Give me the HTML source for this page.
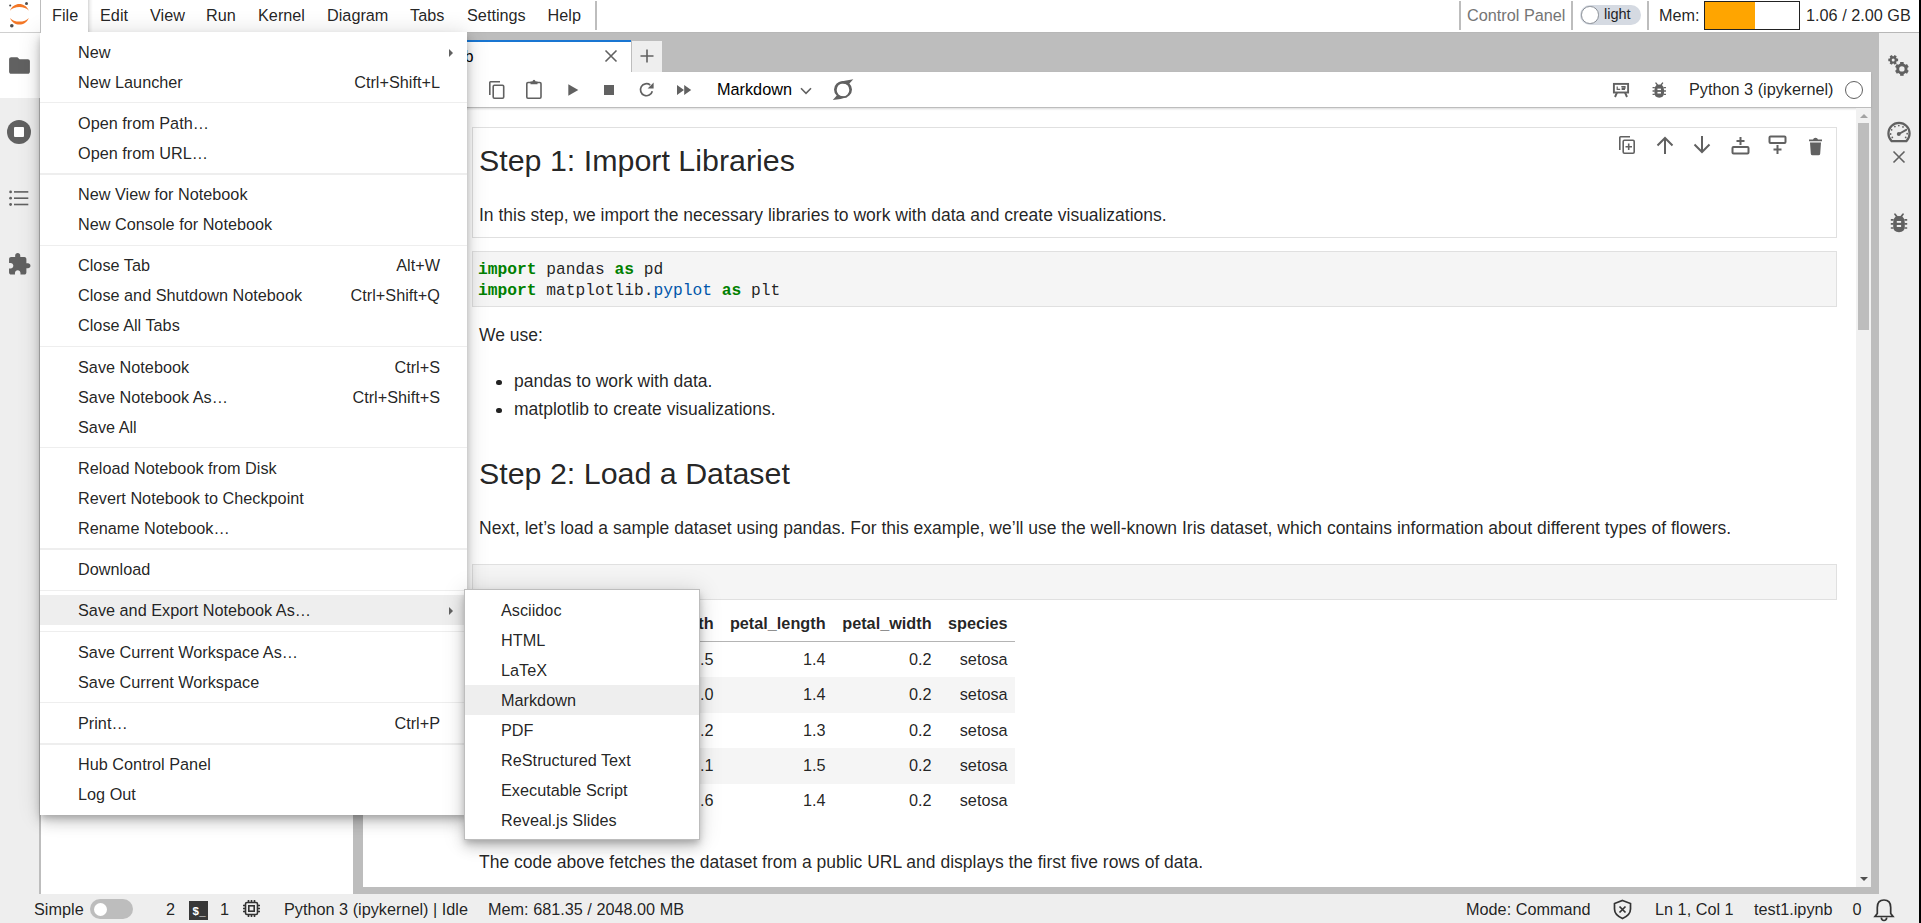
<!DOCTYPE html>
<html><head><meta charset="utf-8">
<style>
*{box-sizing:border-box;margin:0;padding:0}
html,body{width:1921px;height:923px;overflow:hidden;background:#fff;font-family:"Liberation Sans",sans-serif;color:rgba(0,0,0,.87)}
.a{position:absolute}
.t{position:absolute;white-space:nowrap;line-height:1}
svg{position:absolute;display:block}
/* top */
#top{left:0;top:0;width:1921px;height:32px;background:#fff}
.mb{font-size:16.25px;top:7px;color:rgba(0,0,0,.87)}
.sep{width:2px;background:#bdbdbd}
/* main */
#main{left:0;top:32px;width:1921px;height:862px;background:#bdbdbd}
#lsb{left:0;top:32px;width:40px;height:862px;background:#eee;border-right:1px solid #bdbdbd}
#fb{left:41px;top:32px;width:312px;height:862px;background:#fff}
#rsb{left:1879px;top:33px;width:40px;height:861px;background:#eee}
#status{left:0;top:894px;width:1921px;height:29px;background:#eee}
.st{font-size:16.25px;top:901px;color:rgba(0,0,0,.87)}
/* notebook */
#nb{left:363px;top:72px;width:1508px;height:815px;background:#fff}
#tbar{left:363px;top:72px;width:1508px;height:36px;background:#fff;border-bottom:1px solid #bdbdbd;box-shadow:0 1px 2px rgba(0,0,0,.15)}
.cell{position:absolute;left:472px;width:1365px}
.md{font-size:17.5px;color:rgba(0,0,0,.87)}
.tb{font-size:16.25px;color:rgba(0,0,0,.87)}
/* menu */
#menu{left:40px;top:32px;width:427px;height:782.5px;background:#fff;box-shadow:0 3.75px 6.25px -1.25px rgba(0,0,0,.2),0 7.5px 12.5px 0 rgba(0,0,0,.14),0 1.25px 22.5px 0 rgba(0,0,0,.14);}
.mi{position:absolute;left:0;width:100%;height:30px}
.mi .l{position:absolute;left:38px;top:6.5px;font-size:16.25px;white-space:nowrap;line-height:1;color:rgba(0,0,0,.87)}
.mi .k{position:absolute;right:27px;top:6.5px;font-size:16.25px;white-space:nowrap;line-height:1;color:rgba(0,0,0,.87)}
.ms{position:absolute;left:0;width:100%;height:1.25px;background:#eee}
.hl{background:#eee}
.sub .mi .l{left:36px}
.arr{position:absolute;left:409.2px;top:11.5px;width:0;height:0;border-top:4px solid transparent;border-bottom:4px solid transparent;border-left:4.5px solid #616161}
#sub{left:464px;top:589px;width:236px;height:251px;background:#fff;border:1px solid #bdbdbd;box-shadow:0 3.75px 6.25px -1.25px rgba(0,0,0,.2),0 7.5px 12.5px 0 rgba(0,0,0,.14),0 1.25px 22.5px 0 rgba(0,0,0,.14)}
</style></head><body>
<div id="main" class="a"></div>
<div class="a" style="left:0;top:32px;width:1921px;height:1px;background:#b7b7b7"></div>
<div id="top" class="a"></div>
<div id="lsb" class="a"></div>
<div id="fb" class="a"></div>
<div id="rsb" class="a"></div>
<div id="nb" class="a"></div>
<div id="tbar" class="a"></div>
<div id="status" class="a"></div>

<!-- menubar text -->
<div class="t mb" style="left:100px">Edit</div>
<div class="t mb" style="left:150px">View</div>
<div class="t mb" style="left:206px">Run</div>
<div class="t mb" style="left:258px">Kernel</div>
<div class="t mb" style="left:327px">Diagram</div>
<div class="t mb" style="left:410px">Tabs</div>
<div class="t mb" style="left:467px">Settings</div>
<div class="t mb" style="left:547.5px">Help</div>
<div class="a sep" style="left:595px;top:1px;height:29px"></div>

<!-- notebook content -->
<div class="a" style="left:472px;top:127px;width:1365px;height:111px;border:1px solid #e0e0e0"></div>
<div class="t" style="left:479px;top:145px;font-size:30.4px">Step 1: Import Libraries</div>
<div class="t md" style="left:479px;top:207px">In this step, we import the necessary libraries to work with data and create visualizations.</div>
<div class="a" style="left:472px;top:251px;width:1365px;height:56px;border:1px solid #e0e0e0;background:#f5f5f5"></div>
<div class="t" style="left:478px;top:259px;font-family:'Liberation Mono',monospace;font-size:16.25px;line-height:21px"><span style="color:#008000;font-weight:bold">import</span> pandas <span style="color:#008000;font-weight:bold">as</span> pd<br><span style="color:#008000;font-weight:bold">import</span> matplotlib.<span style="color:#05a">pyplot</span> <span style="color:#008000;font-weight:bold">as</span> plt</div>
<div class="t md" style="left:479px;top:327px">We use:</div>
<div class="a" style="left:496px;top:379.5px;width:5.5px;height:5.5px;border-radius:50%;background:#222"></div>
<div class="t md" style="left:514px;top:373px">pandas to work with data.</div>
<div class="a" style="left:496px;top:407.5px;width:5.5px;height:5.5px;border-radius:50%;background:#222"></div>
<div class="t md" style="left:514px;top:401px">matplotlib to create visualizations.</div>
<div class="t" style="left:479px;top:458px;font-size:30.4px">Step 2: Load a Dataset</div>
<div class="t md" style="left:479px;top:520px">Next, let’s load a sample dataset using pandas. For this example, we’ll use the well-known Iris dataset, which contains information about different types of flowers.</div>
<div class="a" style="left:472px;top:564px;width:1365px;height:36px;border:1px solid #e0e0e0;background:#f5f5f5"></div>
<div class="t md" style="left:479px;top:854px">The code above fetches the dataset from a public URL and displays the first five rows of data.</div>


<!-- logo -->
<svg style="left:0;top:0" width="40" height="32" viewBox="0 0 40 32">
<path fill="#F37726" d="M10,10.7 C13.5,1.8 25.3,1.8 28.8,10.7 C25,5.8 13.8,5.8 10,10.7Z"/>
<path fill="#F37726" d="M10,17.9 C13.5,26.8 25.3,26.8 28.8,17.9 C25,22.8 13.8,22.8 10,17.9Z"/>
<circle cx="26.5" cy="3.6" r="1.5" fill="#4e4e4e"/>
<circle cx="10.2" cy="5.5" r="1.05" fill="#4e4e4e"/>
<circle cx="11.8" cy="25.8" r="1.8" fill="#4e4e4e"/>
</svg>
<div class="a" style="left:0;top:32px;width:40px;height:1px;background:#d0d0d0"></div>
<!-- File active item -->
<div class="a" style="left:87px;top:0;width:6px;height:32px;background:linear-gradient(to right,rgba(0,0,0,.22),rgba(0,0,0,.06) 50%,rgba(0,0,0,0));z-index:4"></div>
<div class="a" style="left:40px;top:0;width:47.5px;height:33px;background:#fff;border-left:1px solid #bdbdbd;z-index:5"></div>
<div class="t mb" style="left:52px;z-index:6">File</div>
<!-- left sidebar tabs -->
<div class="a" style="left:0;top:33px;width:40px;height:65px;background:#fff"></div>
<svg style="left:7px;top:53px" width="25" height="25" viewBox="0 0 24 24"><path fill="#616161" d="M10 4H4c-1.1 0-1.99.9-1.99 2L2 18c0 1.1.9 2 2 2h16c1.1 0 2-.9 2-2V8c0-1.1-.9-2-2-2h-8l-2-2z"/></svg>
<svg style="left:7px;top:120px" width="24" height="24" viewBox="0 0 24 24"><circle cx="12" cy="12" r="12" fill="#616161"/><rect x="7" y="7" width="10" height="10" rx="1" fill="#fff"/></svg>
<svg style="left:9px;top:188px" width="21" height="20" viewBox="0 0 21 20"><g fill="#616161"><circle cx="1.6" cy="3.9" r="1.4"/><circle cx="1.6" cy="10.2" r="1.4"/><circle cx="1.6" cy="16.5" r="1.4"/><rect x="5" y="3.1" width="14.3" height="1.6"/><rect x="5" y="9.4" width="14.3" height="1.6"/><rect x="5" y="15.7" width="14.3" height="1.6"/></g></svg>
<svg style="left:6.7px;top:251.6px" width="24.5" height="24.5" viewBox="0 0 24 24"><path fill="#616161" d="M20.5 11H19V7c0-1.1-.9-2-2-2h-4V3.5C13 2.12 11.88 1 10.5 1S8 2.12 8 3.5V5H4c-1.1 0-1.99.9-1.99 2v3.8H3.5c1.49 0 2.7 1.21 2.7 2.7s-1.21 2.7-2.7 2.7H2V20c0 1.1.9 2 2 2h3.8v-1.5c0-1.490 1.21-2.7 2.7-2.7 1.49 0 2.7 1.21 2.7 2.7V22H17c1.1 0 2-.9 2-2v-4h1.5c1.38 0 2.5-1.12 2.5-2.5S21.88 11 20.5 11z"/></svg>

<!-- top right -->
<div class="a sep" style="left:1459px;top:1px;height:29px"></div>
<div class="t" style="left:1467px;top:7px;font-size:16.25px;color:#757575">Control Panel</div>
<div class="a sep" style="left:1571px;top:1px;height:29px"></div>
<div class="a" style="left:1580px;top:5px;width:61px;height:20px;border-radius:10px;background:#d5dae2"></div>
<div class="a" style="left:1581px;top:6px;width:17.5px;height:17.5px;border-radius:50%;background:#fff;border:1.3px solid #8a8f96"></div>
<div class="t" style="left:1604px;top:7px;font-size:14.5px;color:#1f2328">light</div>
<div class="a sep" style="left:1647px;top:1px;height:29px"></div>
<div class="t" style="left:1659px;top:7px;font-size:16.25px">Mem:</div>
<div class="a" style="left:1704px;top:1px;width:96px;height:29px;border:1px solid #222;background:#fff"></div>
<div class="a" style="left:1705px;top:2px;width:50px;height:27px;background:#ffa500"></div>
<div class="t" style="left:1806px;top:7px;font-size:16.25px">1.06 / 2.00 GB</div>

<!-- tab bar -->
<div class="a" style="left:363px;top:40px;width:268px;height:32px;background:#fff;border-top:2.5px solid #1976d2"></div>
<div class="t" style="left:395px;top:48px;font-size:16.25px;color:#000">test1.ipynb</div>
<svg style="left:604px;top:49px" width="14" height="14" viewBox="0 0 14 14"><path d="M1.5 1.5L12.5 12.5M12.5 1.5L1.5 12.5" stroke="#616161" stroke-width="1.6"/></svg>
<div class="a" style="left:632px;top:41px;width:30px;height:31px;background:#eee"></div>
<svg style="left:639px;top:48px" width="16" height="16" viewBox="0 0 16 16"><path d="M8 1.5V14.5M1.5 8H14.5" stroke="#616161" stroke-width="1.6"/></svg>

<!-- toolbar icons -->
<svg style="left:488px;top:80px" width="18" height="20" viewBox="0 0 18 20"><g fill="none" stroke="#616161" stroke-width="1.6"><path d="M1.8 15V2.5Q1.8 1.8 2.5 1.8H12"/><rect x="5.2" y="5.2" width="10.5" height="13" rx="1.2"/></g></svg>
<svg style="left:525px;top:79px" width="18" height="21" viewBox="0 0 18 21"><g fill="none" stroke="#616161" stroke-width="1.6"><rect x="1.8" y="3.5" width="14.2" height="15.7" rx="1.2"/></g><path fill="#616161" d="M5.5 2.5H7.3Q8 0.8 9 0.8Q10 0.8 10.7 2.5H12.5V5.2H5.5Z"/></svg>
<svg style="left:567px;top:83px" width="13" height="14" viewBox="0 0 13 14"><path fill="#616161" d="M1.3 1.3L11.3 7L1.3 12.7Z"/></svg>
<svg style="left:603px;top:84px" width="12" height="12" viewBox="0 0 12 12"><rect x="1" y="1" width="10" height="10" fill="#616161"/></svg>
<svg style="left:638px;top:80px" width="18" height="19" viewBox="0 0 18 19"><path d="M14.3 11.2A6 6 0 1 1 12.2 5" fill="none" stroke="#616161" stroke-width="1.7"/><path fill="#616161" d="M15.6 2.6V8.6H9.6Z"/></svg>
<svg style="left:676px;top:84px" width="17" height="12" viewBox="0 0 17 12"><path fill="#616161" d="M1 1L8 6L1 11ZM8.2 1L15.2 6L8.2 11Z"/></svg>
<div class="t" style="left:717px;top:81px;font-size:16.25px;color:#000">Markdown</div>
<svg style="left:800px;top:87px" width="12" height="8" viewBox="0 0 12 8"><path d="M1 1.3L6 6.3L11 1.3" fill="none" stroke="#616161" stroke-width="1.6"/></svg>
<svg style="left:825px;top:74px" width="36" height="30" viewBox="0 0 36 30"><path fill-rule="evenodd" fill="#616161" d="M27 15.5A9 8.6 0 1 1 9 15.5A9 8.6 0 1 1 27 15.5Z M24.3 15.9A6.3 6.5 0 1 0 11.7 15.9A6.3 6.5 0 1 0 24.3 15.9Z"/><path fill="#616161" d="M13 8.5Q19 6.5 28.3 5.3L23.5 10.5Z M7.8 26L12 21.2L22.5 23Q16 25.5 7.8 26Z"/></svg>

<svg style="left:1612px;top:82px" width="18" height="16" viewBox="0 0 18 16"><rect x="1.9" y="1.9" width="14.2" height="8.6" fill="none" stroke="#616161" stroke-width="1.9"/><path d="M5 10.5L3 15M13 10.5L15 15" stroke="#616161" stroke-width="1.9"/><path d="M5.2 4.6V7.4H8.2M9.3 4.6H13V6.2H10.2V7.4H13" fill="none" stroke="#616161" stroke-width="1.2"/></svg>
<svg style="left:1646.6px;top:77.7px" width="24.5" height="24.5" viewBox="0 0 30 30"><path fill="#616161" d="M11.6 8.6Q15 7.4 18.4 8.6Q20.8 10.6 20.8 14.5V18.5Q20.8 24.2 15 24.2Q9.2 24.2 9.2 18.5V14.5Q9.2 10.6 11.6 8.6Z"/><path d="M11 6.3L13.2 9M19 6.3L16.8 9" stroke="#616161" stroke-width="1.8" stroke-linecap="round"/><path d="M6.8 11.9H9.6M6.8 15.9H9.6M6.8 20H9.6M20.4 11.9H23.2M20.4 15.9H23.2M20.4 20H23.2" stroke="#616161" stroke-width="1.6"/><rect x="12.8" y="13" width="4.3" height="1.8" fill="#fff"/><rect x="12.8" y="17" width="4.3" height="2" fill="#fff"/></svg>
<div class="t" style="left:1689px;top:81px;font-size:16.25px">Python 3 (ipykernel)</div>
<div class="a" style="left:1845px;top:81px;width:18px;height:18px;border-radius:50%;border:1.7px solid #616161"></div>

<!-- scrollbar -->
<div class="a" style="left:1856px;top:108px;width:15px;height:779px;background:#f1f1f1"></div>
<div class="a" style="left:1858px;top:123px;width:11px;height:207px;background:#bdbdbd"></div>
<svg style="left:1859px;top:113px" width="10" height="6" viewBox="0 0 10 6"><path d="M1 5L5 1L9 5Z" fill="#a3a3a3"/></svg>
<svg style="left:1859px;top:876px" width="10" height="6" viewBox="0 0 10 6"><path d="M1 1L5 5L9 1Z" fill="#505050"/></svg>

<!-- cell toolbar -->
<svg style="left:1618px;top:135px" width="19" height="20" viewBox="0 0 19 20"><g fill="none" stroke="#616161" stroke-width="1.6"><path d="M1.8 15V2.5Q1.8 1.8 2.5 1.8H12"/><rect x="5.2" y="5.2" width="11" height="13" rx="1.2"/><path d="M10.7 8.5V15M7.5 11.7H14"/></g></svg>
<svg style="left:1656px;top:136px" width="18" height="19" viewBox="0 0 18 19"><path d="M9 18V2M1.5 9.5L9 2L16.5 9.5" fill="none" stroke="#616161" stroke-width="2"/></svg>
<svg style="left:1693px;top:135px" width="18" height="19" viewBox="0 0 18 19"><path d="M9 1V17M1.5 9.5L9 17L16.5 9.5" fill="none" stroke="#616161" stroke-width="2"/></svg>
<svg style="left:1731px;top:136px" width="19" height="20" viewBox="0 0 19 20"><g fill="none" stroke="#616161" stroke-width="2"><rect x="1.5" y="11" width="16" height="6.5" rx="1"/><path d="M9.5 1V9M5.5 5H13.5"/></g></svg>
<svg style="left:1768px;top:135px" width="19" height="20" viewBox="0 0 19 20"><g fill="none" stroke="#616161" stroke-width="2"><rect x="1.5" y="1.5" width="16" height="6.5" rx="1"/><path d="M9.5 10V19M5.5 14.5H13.5"/></g></svg>
<svg style="left:1808px;top:136.5px" width="15" height="19" viewBox="0 0 15 19"><path fill="#616161" d="M1 2.5H5Q5.5 0.8 7.5 0.8Q9.5 0.8 10 2.5H14V4.3H1Z M2 5.5H13L12.2 16.7Q12 18.2 10.5 18.2H4.5Q3 18.2 2.8 16.7Z"/></svg>

<!-- right sidebar icons -->
<svg style="left:1883px;top:50px" width="32" height="32" viewBox="0 0 32 32"><circle cx="10.2" cy="9.9" r="3.6" fill="#616161"/><rect x="8.899999999999999" y="5.0" width="2.6" height="4.9" fill="#616161" transform="rotate(30 10.2 9.9)"/><rect x="8.899999999999999" y="5.0" width="2.6" height="4.9" fill="#616161" transform="rotate(90 10.2 9.9)"/><rect x="8.899999999999999" y="5.0" width="2.6" height="4.9" fill="#616161" transform="rotate(150 10.2 9.9)"/><rect x="8.899999999999999" y="5.0" width="2.6" height="4.9" fill="#616161" transform="rotate(210 10.2 9.9)"/><rect x="8.899999999999999" y="5.0" width="2.6" height="4.9" fill="#616161" transform="rotate(270 10.2 9.9)"/><rect x="8.899999999999999" y="5.0" width="2.6" height="4.9" fill="#616161" transform="rotate(330 10.2 9.9)"/><circle cx="10.2" cy="9.9" r="1.5" fill="#eee"/><circle cx="18.9" cy="18.9" r="5.6" fill="#616161"/><rect x="17.15" y="11.999999999999998" width="3.5" height="6.9" fill="#616161" transform="rotate(0 18.9 18.9)"/><rect x="17.15" y="11.999999999999998" width="3.5" height="6.9" fill="#616161" transform="rotate(60 18.9 18.9)"/><rect x="17.15" y="11.999999999999998" width="3.5" height="6.9" fill="#616161" transform="rotate(120 18.9 18.9)"/><rect x="17.15" y="11.999999999999998" width="3.5" height="6.9" fill="#616161" transform="rotate(180 18.9 18.9)"/><rect x="17.15" y="11.999999999999998" width="3.5" height="6.9" fill="#616161" transform="rotate(240 18.9 18.9)"/><rect x="17.15" y="11.999999999999998" width="3.5" height="6.9" fill="#616161" transform="rotate(300 18.9 18.9)"/><circle cx="18.9" cy="18.9" r="2.7" fill="#eee"/></svg>
<svg style="left:1886px;top:120px" width="26" height="24" viewBox="0 0 26 24"><path d="M5.61 21.1A10.6 10.6 0 1 1 20.39 21.1Z" fill="none" stroke="#616161" stroke-width="2.2" stroke-linejoin="round"/><path d="M12.8 14L20.2 9.8" stroke="#616161" stroke-width="2" stroke-linecap="round"/><circle cx="12.8" cy="14" r="2" fill="#616161"/><g fill="#616161"><circle cx="6.3" cy="17.4" r="0.9"/><circle cx="4.6" cy="14" r="0.9"/><circle cx="5.6" cy="9.8" r="0.9"/><circle cx="8.9" cy="6.6" r="0.9"/><circle cx="12.8" cy="5.6" r="0.9"/><circle cx="17" cy="6.9" r="0.9"/><circle cx="21.2" cy="13.7" r="0.9"/><circle cx="19.7" cy="17.4" r="0.9"/></g></svg>
<svg style="left:1892px;top:150px" width="14" height="14" viewBox="0 0 14 14"><path d="M1.5 1.5L12.5 12.5M12.5 1.5L1.5 12.5" stroke="#616161" stroke-width="1.6"/></svg>
<svg style="left:1884px;top:208px" width="30" height="30" viewBox="0 0 30 30"><path fill="#616161" d="M11.6 8.6Q15 7.4 18.4 8.6Q20.8 10.6 20.8 14.5V18.5Q20.8 24.2 15 24.2Q9.2 24.2 9.2 18.5V14.5Q9.2 10.6 11.6 8.6Z"/><path d="M11 6.3L13.2 9M19 6.3L16.8 9" stroke="#616161" stroke-width="1.8" stroke-linecap="round"/><path d="M6.8 11.9H9.6M6.8 15.9H9.6M6.8 20H9.6M20.4 11.9H23.2M20.4 15.9H23.2M20.4 20H23.2" stroke="#616161" stroke-width="1.6"/><rect x="12.8" y="13" width="4.3" height="1.8" fill="#eee"/><rect x="12.8" y="17" width="4.3" height="2" fill="#eee"/></svg>
<div class="a" style="left:1919px;top:0;width:2px;height:923px;background:#000;z-index:20"></div>

<!-- table -->
<div class="a" style="left:479px;top:641px;width:536px;height:1.25px;background:#b4b4b4"></div>
<div class="a" style="left:479px;top:677px;width:536px;height:35.5px;background:#f5f5f5"></div>
<div class="a" style="left:479px;top:748px;width:536px;height:35.5px;background:#f5f5f5"></div>
<div class="t tb" style="right:1207.4px;top:615px;font-weight:bold">sepal_width</div>
<div class="t tb" style="right:1095.4px;top:615px;font-weight:bold">petal_length</div>
<div class="t tb" style="right:989.4px;top:615px;font-weight:bold">petal_width</div>
<div class="t tb" style="right:913.4px;top:615px;font-weight:bold">species</div>
<div class="t tb" style="right:1207.4px;top:651.00px">3.5</div>
<div class="t tb" style="right:1095.4px;top:651.00px">1.4</div>
<div class="t tb" style="right:989.4px;top:651.00px">0.2</div>
<div class="t tb" style="right:913.4px;top:651.00px">setosa</div>
<div class="t tb" style="right:1207.4px;top:686.25px">3.0</div>
<div class="t tb" style="right:1095.4px;top:686.25px">1.4</div>
<div class="t tb" style="right:989.4px;top:686.25px">0.2</div>
<div class="t tb" style="right:913.4px;top:686.25px">setosa</div>
<div class="t tb" style="right:1207.4px;top:721.50px">3.2</div>
<div class="t tb" style="right:1095.4px;top:721.50px">1.3</div>
<div class="t tb" style="right:989.4px;top:721.50px">0.2</div>
<div class="t tb" style="right:913.4px;top:721.50px">setosa</div>
<div class="t tb" style="right:1207.4px;top:756.75px">3.1</div>
<div class="t tb" style="right:1095.4px;top:756.75px">1.5</div>
<div class="t tb" style="right:989.4px;top:756.75px">0.2</div>
<div class="t tb" style="right:913.4px;top:756.75px">setosa</div>
<div class="t tb" style="right:1207.4px;top:792.00px">3.6</div>
<div class="t tb" style="right:1095.4px;top:792.00px">1.4</div>
<div class="t tb" style="right:989.4px;top:792.00px">0.2</div>
<div class="t tb" style="right:913.4px;top:792.00px">setosa</div>
<!-- status bar -->
<div class="t st" style="left:34px">Simple</div>
<div class="a" style="left:90px;top:899px;width:43px;height:20px;border-radius:10px;background:#bdbdbd"></div>
<div class="a" style="left:93.5px;top:902.5px;width:13px;height:13px;border-radius:50%;background:#fff"></div>
<div class="t st" style="left:166px">2</div>
<div class="a" style="left:189px;top:901px;width:19px;height:18.5px;background:#383838;border-radius:0"></div>
<div class="t" style="left:192.5px;top:905.5px;font-size:11.5px;font-weight:bold;color:#fff;font-family:'Liberation Sans',sans-serif;letter-spacing:0.3px">$_</div>
<div class="t st" style="left:220px">1</div>
<svg style="left:242px;top:899px" width="19" height="19" viewBox="0 0 19 19"><g fill="none" stroke="#333" stroke-width="1.6"><rect x="3.5" y="3.5" width="12" height="12" rx="1.5"/><rect x="6.8" y="6.8" width="5.4" height="5.4"/><path d="M6.5 1V3.5M9.5 1V3.5M12.5 1V3.5M6.5 15.5V18M9.5 15.5V18M12.5 15.5V18M1 6.5H3.5M1 9.5H3.5M1 12.5H3.5M15.5 6.5H18M15.5 9.5H18M15.5 12.5H18"/></g></svg>
<div class="t st" style="left:284px">Python 3 (ipykernel) | Idle</div>
<div class="t st" style="left:488px">Mem: 681.35 / 2048.00 MB</div>
<div class="t st" style="left:1466px">Mode: Command</div>
<svg style="left:1612px;top:899px" width="21" height="21" viewBox="0 0 21 21"><path d="M10.5 1.5L18.5 4.5V10Q18.5 16 10.5 19.5Q2.5 16 2.5 10V4.5Z" fill="none" stroke="#333" stroke-width="1.7"/><path d="M7.5 7.5L13.5 13.5M13.5 7.5L7.5 13.5" stroke="#333" stroke-width="1.7"/></svg>
<div class="t st" style="left:1655px">Ln 1, Col 1</div>
<div class="t st" style="left:1754px">test1.ipynb</div>
<div class="t st" style="left:1852.5px">0</div>
<svg style="left:1873px;top:898px" width="22" height="24" viewBox="0 0 22 24"><path d="M11 2Q4.3 2 4.3 9.5V15.5L2 18.5H20L17.7 15.5V9.5Q17.7 2 11 2Z" fill="none" stroke="#333" stroke-width="1.7"/><path d="M8.3 19.5Q8.5 22.5 11 22.5Q13.5 22.5 13.7 19.5" fill="none" stroke="#333" stroke-width="1.7"/></svg>

<!-- menu -->
<div id="menu" class="a">
<div class="mi" style="top:5.00px"><span class="l">New</span><span class="arr"></span></div>
<div class="mi" style="top:35.00px"><span class="l">New Launcher</span><span class="k">Ctrl+Shift+L</span></div>
<div class="ms" style="top:70.00px"></div>
<div class="mi" style="top:76.25px"><span class="l">Open from Path…</span></div>
<div class="mi" style="top:106.25px"><span class="l">Open from URL…</span></div>
<div class="ms" style="top:141.25px"></div>
<div class="mi" style="top:147.50px"><span class="l">New View for Notebook</span></div>
<div class="mi" style="top:177.50px"><span class="l">New Console for Notebook</span></div>
<div class="ms" style="top:212.50px"></div>
<div class="mi" style="top:218.75px"><span class="l">Close Tab</span><span class="k">Alt+W</span></div>
<div class="mi" style="top:248.75px"><span class="l">Close and Shutdown Notebook</span><span class="k">Ctrl+Shift+Q</span></div>
<div class="mi" style="top:278.75px"><span class="l">Close All Tabs</span></div>
<div class="ms" style="top:313.75px"></div>
<div class="mi" style="top:320.00px"><span class="l">Save Notebook</span><span class="k">Ctrl+S</span></div>
<div class="mi" style="top:350.00px"><span class="l">Save Notebook As…</span><span class="k">Ctrl+Shift+S</span></div>
<div class="mi" style="top:380.00px"><span class="l">Save All</span></div>
<div class="ms" style="top:415.00px"></div>
<div class="mi" style="top:421.25px"><span class="l">Reload Notebook from Disk</span></div>
<div class="mi" style="top:451.25px"><span class="l">Revert Notebook to Checkpoint</span></div>
<div class="mi" style="top:481.25px"><span class="l">Rename Notebook…</span></div>
<div class="ms" style="top:516.25px"></div>
<div class="mi" style="top:522.50px"><span class="l">Download</span></div>
<div class="ms" style="top:557.50px"></div>
<div class="a" style="left:0;top:562.5px;width:100%;height:30.25px;background:#eee"></div>
<div class="mi" style="top:563.75px"><span class="l">Save and Export Notebook As…</span><span class="arr"></span></div>
<div class="ms" style="top:598.75px"></div>
<div class="mi" style="top:605.00px"><span class="l">Save Current Workspace As…</span></div>
<div class="mi" style="top:635.00px"><span class="l">Save Current Workspace</span></div>
<div class="ms" style="top:670.00px"></div>
<div class="mi" style="top:676.25px"><span class="l">Print…</span><span class="k">Ctrl+P</span></div>
<div class="ms" style="top:711.25px"></div>
<div class="mi" style="top:717.50px"><span class="l">Hub Control Panel</span></div>
<div class="mi" style="top:747.50px"><span class="l">Log Out</span></div>
</div>
<div id="sub" class="a sub">
<div class="mi" style="top:5.00px"><span class="l">Asciidoc</span></div>
<div class="mi" style="top:35.00px"><span class="l">HTML</span></div>
<div class="mi" style="top:65.00px"><span class="l">LaTeX</span></div>
<div class="mi hl" style="top:95.00px"><span class="l">Markdown</span></div>
<div class="mi" style="top:125.00px"><span class="l">PDF</span></div>
<div class="mi" style="top:155.00px"><span class="l">ReStructured Text</span></div>
<div class="mi" style="top:185.00px"><span class="l">Executable Script</span></div>
<div class="mi" style="top:215.00px"><span class="l">Reveal.js Slides</span></div>
</div>

</body></html>
